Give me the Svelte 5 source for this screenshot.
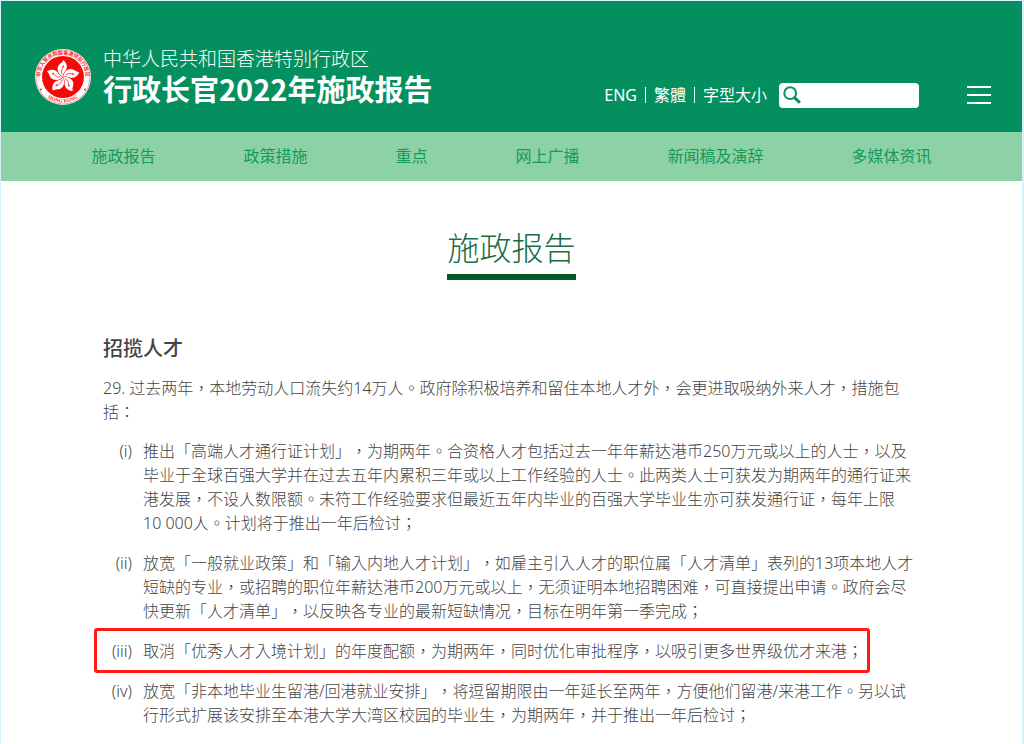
<script>
  const nav = ['施政报告', '政策措施', '重点', '网上广播', '新闻稿及演辞', '多媒体资讯'];
  const petals = [0, 72, 144, 216, 288];
  const measures = [
    { no: '(i)', text: '推出「高端人才通行证计划」，为期两年。合资格人才包括过去一年年薪达港币250万元或以上的人士，以及毕业于全球百强大学并在过去五年内累积三年或以上工作经验的人士。此两类人士可获发为期两年的通行证来港发展，不设人数限额。未符工作经验要求但最近五年内毕业的百强大学毕业生亦可获发通行证，每年上限10\u00a0000人。计划将于推出一年后检讨；' },
    { no: '(ii)', text: '放宽「一般就业政策」和「输入内地人才计划」，如雇主引入人才的职位属「人才清单」表列的13项本地人才短缺的专业，或招聘的职位年薪达港币200万元或以上，无须证明本地招聘困难，可直接提出申请。政府会尽快更新「人才清单」，以反映各专业的最新短缺情况，目标在明年第一季完成；' },
    { no: '(iii)', text: '取消「优秀人才入境计划」的年度配额，为期两年，同时优化审批程序，以吸引更多世界级优才来港；', marked: true },
    { no: '(iv)', text: '放宽「非本地毕业生留港/回港就业安排」，将逗留期限由一年延长至两年，方便他们留港/来港工作。另以试行形式扩展该安排至本港大学大湾区校园的毕业生，为期两年，并于推出一年后检讨；' }
  ];
</script>

<div class="page">
  <header>
    <a class="brand" href="#home">
      <svg class="emblem" viewBox="0 0 56 56" aria-hidden="true">
        <defs>
          <path id="ring-top" d="M7.2 37 A22.6 22.6 0 1 1 48.8 37" />
          <path id="ring-bottom" d="M10.2 46.3 A25.6 25.6 0 0 0 45.8 46.3" />
        </defs>
        <circle cx="28" cy="28" r="28" fill="#fff" />
        <circle cx="28" cy="28" r="27" fill="none" stroke="#f66" stroke-width=".7" />
        <circle cx="28" cy="28" r="21" fill="#f80808" />
        <text class="ring cjk"><textPath href="#ring-top" startOffset="50%">中华人民共和国香港特别行政区</textPath></text>
        <text class="ring"><textPath href="#ring-bottom" startOffset="50%">HONG KONG</textPath></text>
        <circle cx="6" cy="40.5" r="1" fill="#f22" />
        <circle cx="50" cy="40.5" r="1" fill="#f22" />
        {#each petals as angle}
          <g transform="rotate({angle} 28 28)">
            <path d="M28 27.8 C24.5 26 22.2 23 22.6 19 C23 15.2 27 14.4 28.4 11 C30.6 13 32.6 16 31.6 19.6 C30.7 22.6 27.8 23.6 28 27.8Z" fill="#fff" />
            <path d="M27.2 25.4 C26 23.2 26.2 20.6 28 18.4" fill="none" stroke="#f33" stroke-width=".8" />
            <circle cx="28.2" cy="17.6" r="1" fill="#f33" />
          </g>
        {/each}
      </svg>
      <span class="names">
        <span class="region">中华人民共和国香港特别行政区</span>
        <span class="name">行政长官2022年施政报告</span>
      </span>
    </a>
    <div class="tools">
      <a href="#eng">ENG</a>
      <a href="#trad">繁體</a>
      <a href="#size">字型大小</a>
      <form class="search" role="search">
        <button type="button" aria-label="搜寻">
          <svg viewBox="0 0 18 18" aria-hidden="true">
            <circle cx="7.2" cy="7.2" r="5.9" fill="none" stroke="#08905f" stroke-width="2" />
            <path d="M11.6 11.6 L16 15.8" stroke="#08905f" stroke-width="3" stroke-linecap="round" />
          </svg>
        </button>
        <input type="text" aria-label="搜寻" />
      </form>
      <button class="menu" type="button" aria-label="目录"><i></i><i></i><i></i></button>
    </div>
  </header>

  <nav>
    {#each nav as item}<a href="#nav">{item}</a>{/each}
  </nav>

  <main>
    <h1>施政报告</h1>
    <h2>招揽人才</h2>
    <p>29. 过去两年，本地劳动人口流失约14万人。政府除积极培养和留住本地人才外，会更进取吸纳外来人才，措施包括：</p>
    <ol>
      {#each measures as m}
        <li class:marked={m.marked}>
          <span class="no">{m.no}</span>
          <span>{m.text}</span>
        </li>
      {/each}
    </ol>
  </main>
</div>

<style>
  :global(body) {
    margin: 0;
    background: #fff;
  }
  .page {
    box-sizing: border-box;
    min-height: 100vh;
    border: solid #d9effa;
    border-width: 1px 2px 0 1px;
    font-family: "Noto Sans", "Noto Sans CJK TC", sans-serif;
    font-size: 16px;
    line-height: 24px;
    font-weight: 300;
    text-spacing-trim: space-all;
    color: #444;
    background: #fff;
  }
  a {
    color: inherit;
    text-decoration: none;
  }
  header {
    display: flex;
    justify-content: space-between;
    box-sizing: border-box;
    height: 131px;
    padding: 45px 31px 0 34px;
    background: #04905e;
    color: #fff;
  }
  .brand {
    display: flex;
    align-items: flex-start;
    gap: 12px;
    white-space: nowrap;
    font-family: "Noto Sans CJK TC", sans-serif;
  }
  .emblem {
    width: 56px;
    height: 56px;
    margin-top: 3px;
  }
  .ring {
    font: 700 5px "Liberation Serif", serif;
    fill: #f22;
    text-anchor: middle;
  }
  .cjk {
    font: 700 5px "Noto Sans CJK SC", sans-serif;
  }
  .names {
    display: flex;
    flex-direction: column;
  }
  .region {
    font-size: 19px;
    line-height: 24px;
  }
  .name {
    font-size: 29px;
    line-height: 36px;
    font-weight: 700;
  }
  .tools {
    display: flex;
    align-items: center;
    height: 24px;
    margin-top: 37px;
    font-weight: 400;
    white-space: nowrap;
  }
  .tools a {
    line-height: 16px;
  }
  .tools a + a {
    margin-left: 8px;
    padding-left: 8px;
    border-left: 1px solid #fff;
  }
  .search {
    display: flex;
    align-items: center;
    box-sizing: border-box;
    width: 140px;
    height: 25px;
    margin: 0 48px 0 12px;
    padding: 0 4px;
    border-radius: 4px;
    background: #fff;
  }
  .search button {
    flex: none;
    width: 18px;
    height: 18px;
    padding: 0;
    border: 0;
    background: none;
  }
  .search svg {
    display: block;
  }
  .search input {
    flex: 1;
    min-width: 0;
    border: 0;
    outline: 0;
    background: none;
    font: inherit;
  }
  .menu {
    display: flex;
    flex-direction: column;
    gap: 6px;
    width: 24px;
    padding: 0;
    border: 0;
    background: none;
  }
  .menu i {
    height: 2px;
    background: #fff;
  }
  nav {
    display: flex;
    justify-content: center;
    align-items: center;
    gap: 88px;
    box-sizing: border-box;
    height: 49px;
    padding-bottom: 2px;
    background: #8dd1a6;
    color: #169a5c;
    font-weight: 400;
    white-space: nowrap;
  }
  main {
    padding: 45px 102px 0;
  }
  h1 {
    width: max-content;
    margin: 0 auto 53px;
    padding: 0 0 4px;
    border-bottom: 6px solid #005a28;
    font-size: 32px;
    line-height: 44px;
    font-weight: 300;
    color: #1c6b42;
  }
  h2 {
    margin: 0 0 11px;
    font-size: 20px;
    line-height: 32px;
    font-weight: 500;
  }
  p {
    margin: 0;
    padding-right: 4px;
  }
  ol {
    margin: 15px 0 0;
    padding: 0 4px 0 0;
    list-style: none;
  }
  li {
    position: relative;
    display: grid;
    grid-template-columns: 29px 1fr;
    column-gap: 11px;
    margin-bottom: 16px;
  }
  li:last-child {
    margin-bottom: 0;
  }
  .no {
    justify-self: end;
    white-space: nowrap;
  }
  .marked::after {
    content: "";
    position: absolute;
    inset: -11px 46px -10px -9px;
    border: 3px solid #ff1b14;
    border-radius: 3px;
  }
</style>
